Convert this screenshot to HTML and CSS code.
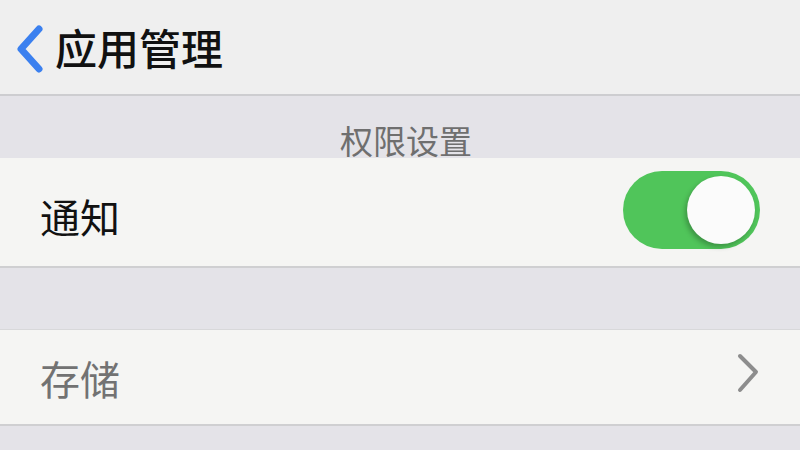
FILE: index.html
```html
<!DOCTYPE html>
<html lang="zh">
<head>
<meta charset="utf-8">
<link rel="stylesheet" href="styles.css">
</head>
<body>
<div class="screen">
  <header class="nav">
    <svg class="back" width="28" height="48" viewBox="0 0 28 48"><path d="M23 4 L5 24 L23 44" fill="none" stroke="#3b80ef" stroke-width="7" stroke-linecap="round" stroke-linejoin="round"/></svg>
    <span class="nav-title">应用管理</span>
  </header>
  <div class="section-head"><span>权限设置</span></div>
  <div class="row row-notify">
    <span class="label">通知</span>
    <div class="toggle"><div class="knob"></div></div>
  </div>
  <div class="gap"></div>
  <div class="row row-storage">
    <span class="label muted">存储</span>
    <svg class="chev" width="24" height="40" viewBox="0 0 24 40"><path d="M4 3 L20 19 L4 37" fill="none" stroke="#8d8d8d" stroke-width="4" stroke-linecap="round" stroke-linejoin="round"/></svg>
  </div>
  <div class="rest"></div>
</div>
</body>
</html>
```
FILE: styles.css
```css
html, body {
  margin: 0;
  padding: 0;
}
body {
  width: 800px;
  height: 450px;
  overflow: hidden;
  background: #e4e3e8;
  font-family: "Noto Sans CJK SC", "Noto Sans", sans-serif;
}
.screen {
  display: flex;
  flex-direction: column;
  width: 800px;
  height: 450px;
}
.nav {
  height: 96px;
  flex: none;
  box-sizing: border-box;
  background: #efefef;
  border-bottom: 2px solid #cdcdd0;
  display: flex;
  align-items: center;
  padding-left: 16px;
  gap: 11px;
}
.back {
  display: block;
  margin-top: 4px;
}
.nav-title {
  font-size: 42px;
  line-height: 42px;
  font-weight: 500;
  color: #111;
}
.section-head {
  height: 62px;
  flex: none;
  box-sizing: border-box;
  padding-top: 26px;
  padding-left: 12px;
  text-align: center;
  font-size: 33px;
  line-height: 36px;
  color: #6f6f6f;
  background: #e4e3e8;
  position: relative;
  z-index: 1;
}
.row {
  flex: none;
  display: flex;
  align-items: center;
  justify-content: space-between;
  padding: 0 40px;
  background: #f5f5f3;
  box-sizing: border-box;
}
.row-notify {
  height: 110px;
  border-bottom: 2px solid #cfcfd1;
}
.row-storage {
  height: 97px;
  border-top: 1px solid #d8d8da;
  border-bottom: 2px solid #cfcfd1;
}
.label {
  font-size: 40px;
  line-height: 44px;
  color: #111;
  margin-top: 8px;
}
.muted {
  color: #727272;
  margin-top: 2px;
}
.toggle {
  width: 137px;
  height: 78px;
  border-radius: 39px;
  background: #50c55a;
  display: flex;
  align-items: center;
  justify-content: flex-end;
  padding-right: 5px;
  box-sizing: border-box;
  margin-top: -4px;
}
.knob {
  width: 68px;
  height: 68px;
  border-radius: 50%;
  background: #fbfbfb;
  box-shadow: -2px 3px 5px rgba(0,0,0,0.25);
}
.chev {
  display: block;
  margin-right: 0;
  margin-top: -8px;
}
.gap {
  height: 61px;
  flex: none;
  background: #e4e3e8;
}
.rest {
  flex: 1;
  background: #e4e3e8;
}
```
